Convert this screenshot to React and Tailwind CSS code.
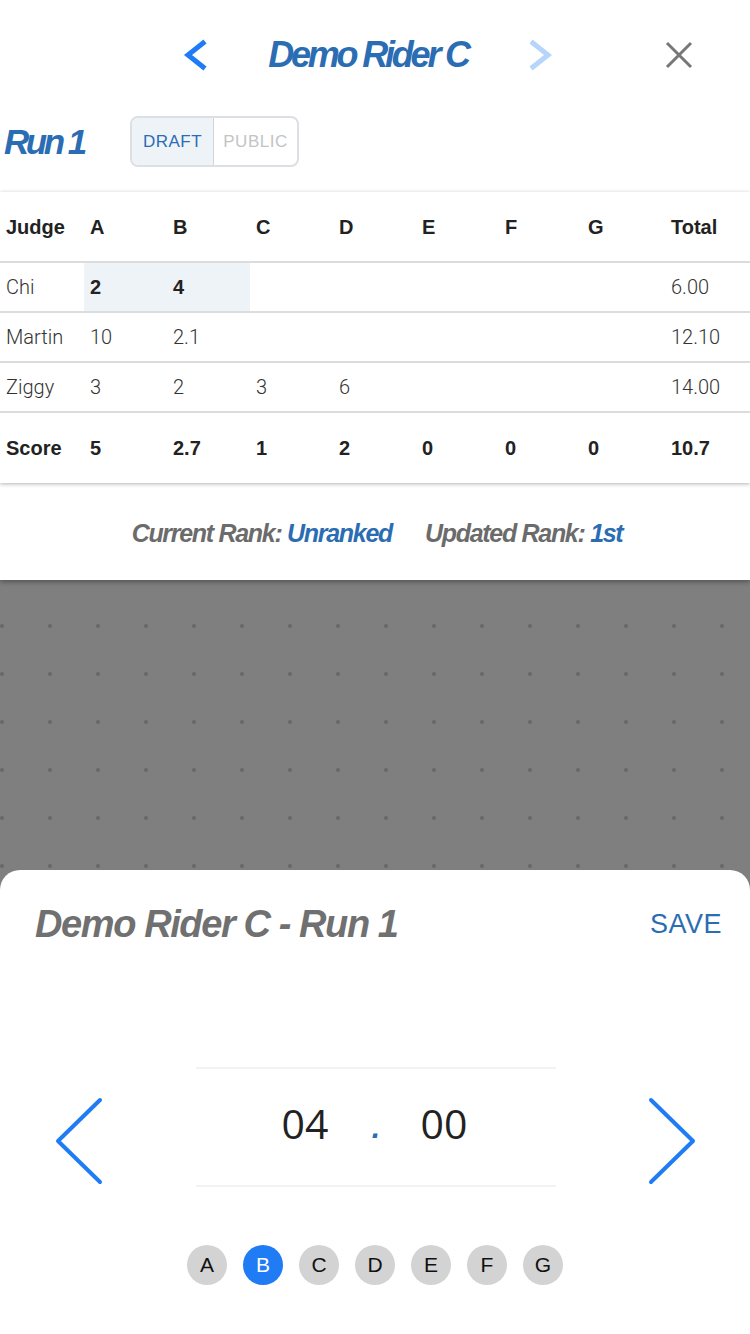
import React from 'react'

const judges = ['A', 'B', 'C', 'D', 'E', 'F', 'G']

const rows = [
  { name: 'Chi', marks: ['2', '4', '', '', '', '', ''], total: '6.00', current: true },
  { name: 'Martin', marks: ['10', '2.1', '', '', '', '', ''], total: '12.10' },
  { name: 'Ziggy', marks: ['3', '2', '3', '6', '', '', ''], total: '14.00' },
]

const score = ['5', '2.7', '1', '2', '0', '0', '0']

// grid for the score table: judge column, 7 marks, total
const cols = 'grid grid-cols-[84px_repeat(7,83px)_1fr]'

const Chevron = ({ dir = 'left', color, w = 26, h = 34, sw = 5, cap = 'butt' }) => {
  const pts =
    dir === 'left'
      ? `${w - 4},${sw / 2 + 1} ${sw},${h / 2} ${w - 4},${h - sw / 2 - 1}`
      : `4,${sw / 2 + 1} ${w - sw},${h / 2} 4,${h - sw / 2 - 1}`
  return (
    <svg width={w} height={h} viewBox={`0 0 ${w} ${h}`} fill="none">
      <polyline points={pts} stroke={color} strokeWidth={sw} strokeLinecap={cap} strokeLinejoin={cap === 'round' ? 'round' : 'miter'} />
    </svg>
  )
}

export default function App() {
  return (
    <div className="w-[750px] h-[1334px] overflow-hidden bg-white flex flex-col font-['Liberation_Sans',Arial,sans-serif]">
      {/* parte superior */}
      <div className="relative z-10 bg-white shadow-[0_2px_5px_rgba(0,0,0,0.35)]">
        <div className="h-[110px] flex items-center">
          <div className="ml-[183px] w-[26px] flex justify-center">
            <Chevron dir="left" color="#1f7cf5" />
          </div>
          <div className="w-[318px] text-center text-[36px] leading-none font-bold italic tracking-[-3.2px] text-[#2b6db3]">
            Demo Rider C
          </div>
          <div className="w-[26px] flex justify-center">
            <Chevron dir="right" color="#b6d5fb" />
          </div>
          <div className="ml-auto mr-[56px]">
            <svg width="30" height="30" viewBox="0 0 30 30">
              <path d="M3 3 L27 27 M27 3 L3 27" stroke="#777" strokeWidth="3" />
            </svg>
          </div>
        </div>

        <div className="h-[82px] flex items-start pt-[6px]">
          <div className="pl-[4px] w-[130px] h-[51px] flex items-center text-[35px] leading-none font-bold italic tracking-[-3.5px] text-[#2b6db3]">
            Run 1
          </div>
          <div className="flex h-[51px] w-[169px] rounded-[8px] border-2 border-[#dcdfe3] overflow-hidden text-[17px] tracking-[0.5px]">
            <div className="w-[82px] bg-[#eef3f8] border-r border-[#d2d4d8] flex items-center justify-center text-[#2b6db3]">
              DRAFT
            </div>
            <div className="flex-1 flex items-center justify-center text-[#c4c4c4]">PUBLIC</div>
          </div>
        </div>

        {/* tabla de puntuaciones */}
        <div className="bg-white shadow-[0_1px_4px_rgba(0,0,0,0.3)]">
          <div className={`${cols} h-[71px] items-center text-[20px] font-bold text-[#222] border-b-2 border-[#dcdcdc]`}>
            <div className="pl-[6px]">Judge</div>
            {judges.map((j) => (
              <div key={j} className="pl-[6px]">{j}</div>
            ))}
            <div className="pl-[6px]">Total</div>
          </div>
          {rows.map((r) => (
            <div
              key={r.name}
              className={`${cols} h-[50px] text-[20px] font-light text-[#333] border-b-2 border-[#dcdcdc] font-['Roboto',sans-serif]`}
            >
              <div className="pl-[6px] flex items-center">{r.name}</div>
              {r.marks.map((m, i) => (
                <div
                  key={i}
                  className={
                    r.current && i < 2
                      ? "pl-[6px] flex items-center bg-[#eef3f8] font-bold text-[#222] font-['Liberation_Sans',sans-serif]"
                      : 'pl-[6px] flex items-center'
                  }
                >
                  {m}
                </div>
              ))}
              <div className="pl-[6px] flex items-center">{r.total}</div>
            </div>
          ))}
          <div className={`${cols} h-[70px] items-center text-[20px] font-bold text-[#222]`}>
            <div className="pl-[6px]">Score</div>
            {score.map((s, i) => (
              <div key={i} className="pl-[6px]">{s}</div>
            ))}
            <div className="pl-[6px]">10.7</div>
          </div>
        </div>

        <div className="h-[97px] pt-[4px] flex items-center justify-center gap-[33px] text-[25px] font-bold italic tracking-[-1.3px] text-[#6b6b6b] pl-[4px]">
          <div>
            Current Rank: <span className="text-[#2b6db3]">Unranked</span>
          </div>
          <div>
            Updated Rank: <span className="text-[#2b6db3]">1st</span>
          </div>
        </div>
      </div>

      {/* fondo oscurecido con la hoja inferior encima */}
      <div className="flex-1 flex flex-col bg-[#7f7f7f] bg-[radial-gradient(circle,#6a6a6a_2px,transparent_2.2px)] bg-[length:48px_48px] bg-[position:26px_22px]">
        <div className="h-[290px] shrink-0" />

        <div className="flex-1 bg-white rounded-t-[20px] flex flex-col">
          <div className="h-[108px] flex items-center pl-[35px] pr-[28px]">
            <div className="text-[38px] leading-none font-bold italic tracking-[-1.4px] text-[#707070]">
              Demo Rider C - Run 1
            </div>
            <div className="ml-auto text-[27px] text-[#2b6db3] tracking-[0.5px]">SAVE</div>
          </div>

          <div className="mt-[89px] flex h-[120px]">
            <div className="w-[196px] pl-[54px] pt-[30px]">
              <Chevron dir="left" color="#1f7cf5" w={50} h={88} sw={4} cap="round" />
            </div>
            <div className="w-[360px] border-y-2 border-[#f3f3f3] flex items-center pb-[6px] pl-[63px] font-['Open_Sans',sans-serif] text-[41px] text-[#222]">
              <span className="w-[92px] text-center">04</span>
              <span className="w-[50px] text-center text-[30px] font-bold italic text-[#2b6db3] font-['Liberation_Sans',sans-serif] mt-[6px]">.</span>
              <span className="w-[86px] text-center">00</span>
            </div>
            <div className="flex-1 pl-[91px] pt-[30px]">
              <Chevron dir="right" color="#1f7cf5" w={50} h={88} sw={4} cap="round" />
            </div>
          </div>

          <div className="mt-[58px] flex justify-center gap-[16px]">
            {judges.map((j) => (
              <div
                key={j}
                className={
                  j === 'B'
                    ? 'w-[40px] h-[40px] rounded-full bg-[#1f7cf5] text-white flex items-center justify-center text-[21px]'
                    : 'w-[40px] h-[40px] rounded-full bg-[#d3d3d3] text-[#111] flex items-center justify-center text-[21px]'
                }
              >
                {j}
              </div>
            ))}
          </div>
        </div>
      </div>
    </div>
  )
}
